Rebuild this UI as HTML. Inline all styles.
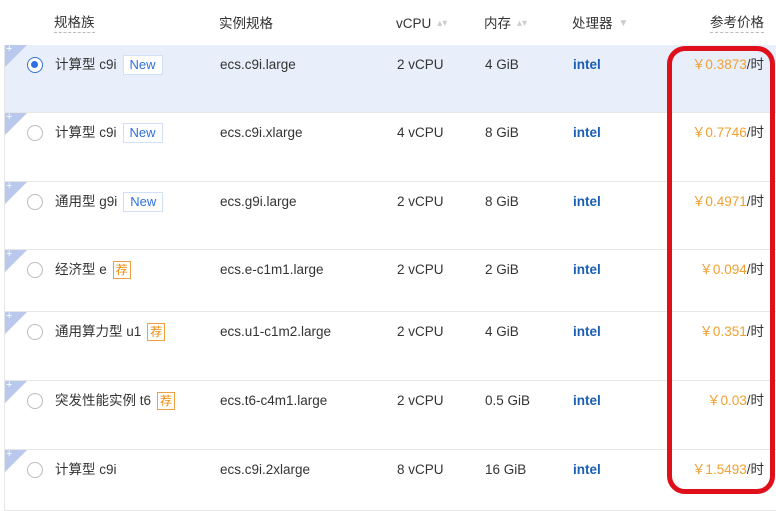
<!DOCTYPE html>
<html><head><meta charset="utf-8"><style>
body{margin:0;width:776px;height:500px;overflow:hidden;background:#fff;font-family:"Liberation Sans","Noto Sans CJK SC",sans-serif;color:#333;font-size:13px;position:relative}
.hdr{position:absolute;top:0;left:4px;right:0;height:45px;background:#fff;border-bottom:1px solid #e6e6e6}
.h{position:absolute;top:14px;font-size:13.5px;line-height:20px;color:#333;white-space:nowrap}
.row{position:absolute;left:4px;right:0;border-bottom:1px solid #e6e6e6;border-left:1px solid #e6e6e6}
.row .t{position:absolute;top:10px;font-size:13.5px;line-height:20px;white-space:nowrap}
.corner{position:absolute;left:0;top:0;width:0;height:0;border-top:22px solid #b9c8ec;border-right:22px solid transparent}
.corner:after{content:"+";position:absolute;left:1px;top:-24px;color:#fff;font-size:11px}
.radio{position:absolute;left:22px;top:12px;width:16px;height:16px;border:1px solid #bbb;border-radius:50%;box-sizing:border-box;background:#fff}
.radio.on{border:1.5px solid #2f6fe0}
.radio.on:after{content:"";position:absolute;left:3px;top:3px;width:7px;height:7px;border-radius:50%;background:#2f6fe0}
.new{display:inline-block;vertical-align:top;border:1px solid #cfe0f7;color:#2f6fe0;padding:0 6px;margin-left:6px;font-size:13px;line-height:18px;background:#fff}
.rec{display:inline-block;vertical-align:top;margin-top:1px;border:1px solid #f0a040;color:#f08a00;padding:0 2px;margin-left:6px;font-size:12px;line-height:16px}
.intel{color:#1a5fb4;font-weight:bold;font-size:13px}
.pr{position:absolute;right:12px;top:10px;font-size:13.5px;line-height:20px}
.pr span{color:#f0a030}
.red{position:absolute;left:667px;top:46px;width:98px;height:438px;border:5px solid #e0101a;border-radius:18px}
.arr{color:#ccc;font-size:10px;margin-left:6px;vertical-align:top;line-height:20px}
</style></head><body>
<div class="hdr">
<div class="h" style="left:50px;border-bottom:1px dashed #bbb;line-height:18px">规格族</div>
<div class="h" style="left:215px">实例规格</div>
<div class="h" style="left:392px">vCPU<span class="arr">▴▾</span></div>
<div class="h" style="left:480px">内存<span class="arr">▴▾</span></div>
<div class="h" style="left:568px">处理器<span class="arr">▼</span></div>
<div class="h" style="right:12px;border-bottom:1px dashed #bbb;line-height:18px">参考价格</div>
</div>

<div class="row" style="top:45px;height:67px;background:#e8eefa"><div class="corner"></div><div class="radio on"></div><div class="t" style="left:50px">计算型 c9i<span class="new">New</span></div><div class="t" style="left:215px">ecs.c9i.large</div><div class="t" style="left:392px">2 vCPU</div><div class="t" style="left:480px">4 GiB</div><div class="t intel" style="left:568px">intel</div><div class="pr"><span>￥0.3873</span>/时</div></div>
<div class="row" style="top:113px;height:68px"><div class="corner"></div><div class="radio"></div><div class="t" style="left:50px">计算型 c9i<span class="new">New</span></div><div class="t" style="left:215px">ecs.c9i.xlarge</div><div class="t" style="left:392px">4 vCPU</div><div class="t" style="left:480px">8 GiB</div><div class="t intel" style="left:568px">intel</div><div class="pr"><span>￥0.7746</span>/时</div></div>
<div class="row" style="top:182px;height:67px"><div class="corner"></div><div class="radio"></div><div class="t" style="left:50px">通用型 g9i<span class="new">New</span></div><div class="t" style="left:215px">ecs.g9i.large</div><div class="t" style="left:392px">2 vCPU</div><div class="t" style="left:480px">8 GiB</div><div class="t intel" style="left:568px">intel</div><div class="pr"><span>￥0.4971</span>/时</div></div>
<div class="row" style="top:250px;height:61px"><div class="corner"></div><div class="radio"></div><div class="t" style="left:50px">经济型 e<span class="rec">荐</span></div><div class="t" style="left:215px">ecs.e-c1m1.large</div><div class="t" style="left:392px">2 vCPU</div><div class="t" style="left:480px">2 GiB</div><div class="t intel" style="left:568px">intel</div><div class="pr"><span>￥0.094</span>/时</div></div>
<div class="row" style="top:312px;height:68px"><div class="corner"></div><div class="radio"></div><div class="t" style="left:50px">通用算力型 u1<span class="rec">荐</span></div><div class="t" style="left:215px">ecs.u1-c1m2.large</div><div class="t" style="left:392px">2 vCPU</div><div class="t" style="left:480px">4 GiB</div><div class="t intel" style="left:568px">intel</div><div class="pr"><span>￥0.351</span>/时</div></div>
<div class="row" style="top:381px;height:68px"><div class="corner"></div><div class="radio"></div><div class="t" style="left:50px">突发性能实例 t6<span class="rec">荐</span></div><div class="t" style="left:215px">ecs.t6-c4m1.large</div><div class="t" style="left:392px">2 vCPU</div><div class="t" style="left:480px">0.5 GiB</div><div class="t intel" style="left:568px">intel</div><div class="pr"><span>￥0.03</span>/时</div></div>
<div class="row" style="top:450px;height:60px"><div class="corner"></div><div class="radio"></div><div class="t" style="left:50px">计算型 c9i</div><div class="t" style="left:215px">ecs.c9i.2xlarge</div><div class="t" style="left:392px">8 vCPU</div><div class="t" style="left:480px">16 GiB</div><div class="t intel" style="left:568px">intel</div><div class="pr"><span>￥1.5493</span>/时</div></div>
<div class="red"></div>
</body></html>
